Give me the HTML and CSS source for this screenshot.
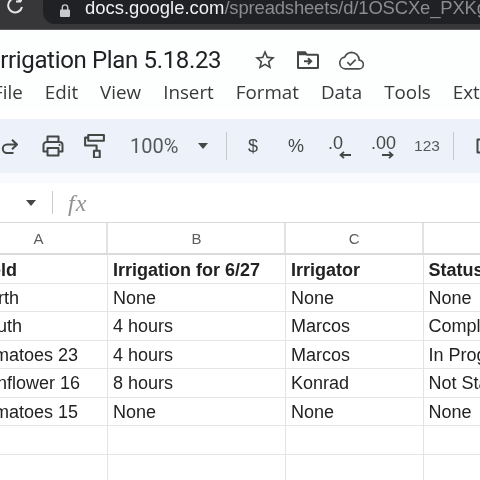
FILE: index.html
```html
<!DOCTYPE html>
<html lang="en">
<head>
<meta charset="utf-8">
<title>Irrigation Plan 5.18.23</title>
<link rel="stylesheet" href="styles.css">
</head>
<body>
<div class="page">
  <header class="browser">
    <svg class="reload" viewBox="0 0 18 18"><path d="M15 3.500v-5M15 3.500h-5M15 3.500A7 7 0 1 0 16 9"/></svg>
    <div class="address">
      <svg class="lock" viewBox="0 0 10 13"><path class="lock-body" d="M1 5.500h8a1 1 0 0 1 1 1V12a1 1 0 0 1-1 1H1a1 1 0 0 1-1-1V6.500a1 1 0 0 1 1-1z"/><path class="lock-arch" d="M2.300 6V3.600a2.700 2.700 0 0 1 5.400 0V6"/></svg>
      <span class="host">docs.google.com</span><span class="path">/spreadsheets/d/1OSCXe_PXKg</span>
    </div>
  </header>

  <section class="title-row">
    <h1 class="title">Irrigation Plan 5.18.23</h1>
    <svg class="doc-icon star" viewBox="0 0 24 24"><path d="M22 9.240l-7.190-.620L12 2 9.190 8.630 2 9.240l5.460 4.730L5.820 21 12 17.270 18.180 21l-1.630-7.030L22 9.240zM12 15.400l-3.760 2.270 1-4.280-3.320-2.880 4.380-.380L12 6.100l1.710 4.040 4.380.380-3.320 2.880 1 4.280L12 15.400z"/></svg>
    <svg class="doc-icon folder" viewBox="0 0 22 18"><path class="line" d="M1 16.500V1.200h7l2 2.600h10.500a.5.500 0 0 1 .5.500v12.200a.5.500 0 0 1-.5.500H1.500a.5.500 0 0 1-.5-.5zM2 3.300h7"/><path class="line" d="M7 10.200h7M11 7.200l3.200 3-3.200 3"/></svg>
    <svg class="doc-icon cloud" viewBox="0 0 24 18"><path class="thin" d="M6 17h13a4.200 4.200 0 0 0 .4-8.400A7.500 7.500 0 0 0 12 1.200 7.500 7.500 0 0 0 5.500 5.700 5.700 5.700 0 0 0 6 17z"/><path class="thin" d="M8 10.500l2.800 2.800 5.200-5.200"/></svg>
  </section>

  <nav class="menu">
    <span class="menu-item file">File</span>
    <span class="menu-item">Edit</span>
    <span class="menu-item">View</span>
    <span class="menu-item">Insert</span>
    <span class="menu-item">Format</span>
    <span class="menu-item">Data</span>
    <span class="menu-item">Tools</span>
    <span class="menu-item">Extensions</span>
  </nav>

  <section class="toolbar">
    <svg class="tool redo" viewBox="0 0 18 18"><path d="M16.500 7.500H7a4.200 4.200 0 0 0 0 8.400h6.500M12 2.700l5 4.800-5 4.800"/></svg>
    <svg class="tool print" viewBox="0 0 24 24"><path d="M6.500 8V2.500h11V8M6.500 17.500h-4V11a3 3 0 0 1 3-3h13a3 3 0 0 1 3 3v6.500h-4M6.500 14h11v7.500h-11z"/><circle class="dot" cx="18.500" cy="11" r="1"/></svg>
    <svg class="tool roller" viewBox="0 0 20 23"><path d="M4 1h15v5.500H4zM4 3.500H1V11h11v5M9.500 16H15v6.500H9.500z"/></svg>
    <span class="zoom">100%</span>
    <span class="caret zoom-caret"></span>
    <span class="tool-sep first"></span>
    <span class="sym dollar">$</span>
    <span class="sym percent">%</span>
    <span class="dec less"><span class="dec-num">.0</span><svg class="arrow" viewBox="0 0 12 8"><path d="M12 4H1.500M5 .800L1.500 4 5 7.200"/></svg></span>
    <span class="dec more"><span class="dec-num">.00</span><svg class="arrow" viewBox="0 0 12 8"><path d="M0 4h10.500M7 .800L10.500 4 7 7.200"/></svg></span>
    <span class="sym num">123</span>
    <span class="tool-sep second"></span>
    <svg class="tool next" viewBox="0 0 12 24"><path d="M7 5.500H1.500v13H7"/></svg>
  </section>
  <div class="toolbar-fade"></div>

  <section class="formula">
    <span class="caret name-caret"></span>
    <span class="formula-sep"></span>
    <span class="fx">fx</span>
  </section>

  <section class="sheet">
    <div class="row head-row"><div class="cell col">A</div><div class="cell col">B</div><div class="cell col">C</div><div class="cell col"></div></div>
    <div class="row bold"><div class="cell">Field</div><div class="cell">Irrigation for 6/27</div><div class="cell">Irrigator</div><div class="cell">Status</div></div>
    <div class="row"><div class="cell">North</div><div class="cell">None</div><div class="cell">None</div><div class="cell">None</div></div>
    <div class="row"><div class="cell">South</div><div class="cell">4 hours</div><div class="cell">Marcos</div><div class="cell">Complete</div></div>
    <div class="row"><div class="cell">Tomatoes 23</div><div class="cell">4 hours</div><div class="cell">Marcos</div><div class="cell">In Progress</div></div>
    <div class="row"><div class="cell">Sunflower 16</div><div class="cell">8 hours</div><div class="cell">Konrad</div><div class="cell">Not Started</div></div>
    <div class="row"><div class="cell">Tomatoes 15</div><div class="cell">None</div><div class="cell">None</div><div class="cell">None</div></div>
    <div class="row"><div class="cell"></div><div class="cell"></div><div class="cell"></div><div class="cell"></div></div>
    <div class="row"><div class="cell"></div><div class="cell"></div><div class="cell"></div><div class="cell"></div></div>
  </section>
</div>
</body>
</html>
```
FILE: styles.css
```css
* { box-sizing: border-box; }
html, body { margin: 0; padding: 0; background: #fff; }
.page { width: 480px; height: 480px; overflow: hidden; background: #fff; filter: blur(0.35px); }

.browser {
  height: 30px; display: flex; align-items: flex-start;
  background: #37373a; border-bottom: 1px solid #59595c; overflow: hidden;
}
.reload { width: 18px; height: 18px; margin: -2px 0 0 6px; flex: none; overflow: visible; }
.reload path { fill: none; stroke: #e6e6e8; stroke-width: 2; }
.address {
  flex: 1; height: 24px; margin: 0 0 0 19px; padding-left: 17px;
  display: flex; align-items: center; overflow: hidden; white-space: nowrap;
  background: #202124; border-bottom-left-radius: 12px;
  font: 18.450px/1 "Liberation Sans", Arial, sans-serif;
  padding-bottom: 8px;
}
.lock { width: 10px; height: 13px; flex: none; margin-right: 15px; margin-top: 5px; }
.lock-body { fill: #c9c9cc; }
.lock-arch { fill: none; stroke: #c9c9cc; stroke-width: 1.400; }
.host { color: #f1f1f3; flex: none; }
.path { color: #8b8c90; flex: none; letter-spacing: -0.150px; }

.title-row { height: 44px; display: flex; align-items: center; background: #fdfefe; padding-top: 16px; overflow: hidden; }
.title {
  margin: 0 0 0 -6px; width: 261px; flex: none; font: 400 24px/1 "Roboto", sans-serif;
  letter-spacing: -0.340px; color: #202124; white-space: nowrap;
}
.doc-icon { flex: none; fill: #444746; }
.star { width: 24px; height: 24px; margin-left: -2px; }
.folder { width: 22px; height: 18px; margin-left: 20px; }
.cloud { width: 25px; height: 19px; margin-left: 20px; }
.line { fill: none; stroke: #444746; stroke-width: 2; }
.thin { fill: none; stroke: #4c4f50; stroke-width: 1.600; }

.menu {
  height: 36px; display: flex; align-items: center; gap: 22px; background: #fdfefe;
  font: 400 18.800px/1 "Open Sans", sans-serif; color: #37393b; white-space: nowrap; overflow: hidden;
}
.menu-item { flex: none; }
.file { margin-left: -7px; }

.toolbar {
  height: 54px; margin-top: 9px; display: flex; align-items: center; background: #edf2fa; overflow: hidden; color: #444746;
}
.tool { flex: none; fill: none; stroke: #444746; stroke-width: 2; stroke-linejoin: round; }
.redo { width: 18px; height: 18px; }
.print { width: 24px; height: 24px; margin-left: 23px; }
.dot { fill: #444746; stroke: none; }
.roller { width: 21px; height: 24px; margin-left: 19px; }
.zoom { margin-left: 25px; width: 68px; flex: none; font: 20px/1 "Roboto", sans-serif; color: #55585b; }
.caret { width: 0; height: 0; border: 5.500px solid transparent; border-top: 6px solid #444746; border-bottom: 0; flex: none; }
.zoom-caret { margin-right: 18px; }
.tool-sep { width: 1px; height: 28px; background: #c7c9cc; flex: none; }
.sym { font: 18px/1 "Liberation Sans", sans-serif; color: #444746; flex: none; }
.dollar { margin-left: 21px; }
.percent { margin-left: 30px; }
.dec { position: relative; flex: none; display: block; height: 26px; font: 400 18px/20px "Liberation Sans", sans-serif; color: #444746; }
.dec-num { display: block; }
.arrow { position: absolute; width: 12px; height: 8px; right: 0; bottom: 0; fill: none; stroke: #444746; stroke-width: 1.800; }
.less { width: 23px; margin-left: 24px; }
.more { width: 23px; margin-left: 20px; }
.num { margin-left: 20px; color: #55585b; font-size: 15.500px; }
.second { margin-left: 13px; }
.next { width: 12px; height: 24px; margin-left: 22px; }

.toolbar-fade { height: 10px; background: #f8fafd; }

.formula { height: 39px; display: flex; align-items: center; background: #fff; }
.name-caret { margin-left: 26px; }
.formula-sep { width: 1px; height: 23px; background: #c9cbcc; margin-left: 16px; }
.fx { margin-left: 15px; font: italic 24px/1 "Liberation Serif", serif; color: #8f9193; letter-spacing: 1px; }

.sheet { margin-left: -30px; border-top: 1px solid #d9dadb; }
.row { display: grid; grid-template-columns: 138px 178px 137.500px 200px; height: 28.500px; border-bottom: 1px solid #e4e5e5; }
.head-row { height: 32px; border-bottom: 2px solid #dadbdc; }
.cell {
  padding: 0 0 0 5px; border-right: 1px solid #e2e3e3; overflow: hidden; white-space: nowrap;
  font: 18px/29px "Liberation Sans", Arial, sans-serif; color: #222;
}
.col { padding: 0 0 0 1px; text-align: center; font-size: 15px; line-height: 32px; color: #5a5c5e; border-right-width: 2px; }
.bold .cell { font-weight: 700; line-height: 31px; }
```
